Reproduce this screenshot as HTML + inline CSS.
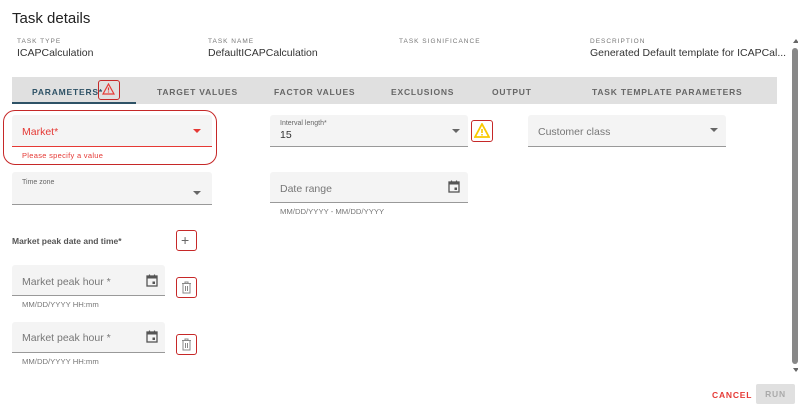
<!DOCTYPE html>
<html><head><style>
*{box-sizing:border-box;margin:0;padding:0}
body{width:798px;height:406px;overflow:hidden;background:#fff;font-family:"Liberation Sans",sans-serif;position:relative;color:#333}
.a{position:absolute;white-space:nowrap}
.lbl{font-size:6.5px;letter-spacing:1px;color:#777}
.val{font-size:10.5px;color:#333}
.tab{font-size:8.5px;font-weight:bold;letter-spacing:0.8px;color:#666;top:87px}
.fld{background:#f4f4f4;border-bottom:1px solid #999;border-radius:3px 3px 0 0}
.ph{font-size:10.5px;color:#777}
.hint{font-size:7.7px;color:#777}
.arr{width:0;height:0;border-left:4px solid transparent;border-right:4px solid transparent;border-top:4px solid #666}
.rb{border:1.5px solid #c62828;border-radius:3px}
</style></head><body>
<div class="a" style="left:12px;top:10px;font-size:15px;color:#222">Task details</div>
<div class="a lbl" style="left:17px;top:38px">TASK TYPE</div>
<div class="a val" style="left:17px;top:47px">ICAPCalculation</div>
<div class="a lbl" style="left:208px;top:38px">TASK NAME</div>
<div class="a val" style="left:208px;top:47px">DefaultICAPCalculation</div>
<div class="a lbl" style="left:399px;top:38px">TASK SIGNIFICANCE</div>
<div class="a lbl" style="left:590px;top:38px">DESCRIPTION</div>
<div class="a val" style="left:590px;top:47px">Generated Default template for ICAPCal...</div>

<div class="a" style="left:12px;top:77px;width:765px;height:27px;background:#e0e0e0"></div>
<div class="a" style="left:12px;top:102px;width:124px;height:2px;background:#2e5266"></div>
<div class="a tab" style="left:32px;color:#2e5266">PARAMETERS*</div>
<div class="a rb" style="left:98px;top:80px;width:22px;height:20px"></div>
<svg class="a" style="left:102px;top:83px" width="13" height="12" viewBox="0 0 13 12"><path d="M6.5 1 L12 11 H1 Z" fill="none" stroke="#e53935" stroke-width="1.2"/><path d="M6.5 4.5v3M6.5 8.5v1" stroke="#e53935" stroke-width="1.2"/></svg>
<div class="a tab" style="left:157px">TARGET VALUES</div>
<div class="a tab" style="left:274px">FACTOR VALUES</div>
<div class="a tab" style="left:391px">EXCLUSIONS</div>
<div class="a tab" style="left:492px">OUTPUT</div>
<div class="a tab" style="left:592px">TASK TEMPLATE PARAMETERS</div>

<div class="a fld" style="left:12px;top:115px;width:200px;height:32px;border-bottom-color:#e53935"></div>
<div class="a" style="left:22px;top:126px;font-size:10.5px;color:#e53935">Market*</div>
<div class="a arr" style="left:193px;top:129px;border-top-color:#e53935"></div>
<div class="a" style="left:22px;top:151px;font-size:7.5px;color:#e53935;letter-spacing:.3px">Please specify a value</div>
<div class="a" style="left:3px;top:110px;width:214px;height:55px;border:1.5px solid #c62828;border-radius:12px"></div>

<div class="a fld" style="left:270px;top:115px;width:198px;height:32px"></div>
<div class="a" style="left:280px;top:120px;font-size:7px;color:#666">Interval length*</div>
<div class="a" style="left:280px;top:129px;font-size:10.5px;color:#333">15</div>
<div class="a arr" style="left:452px;top:129px"></div>
<div class="a rb" style="left:471px;top:120px;width:22px;height:22px"></div>
<svg class="a" style="left:474px;top:123px" width="16" height="15" viewBox="0 0 16 15"><path d="M8 1 L15 14 H1 Z" fill="none" stroke="#f9c900" stroke-width="1.8"/><path d="M8 6v4M8 11v1.5" stroke="#f9c900" stroke-width="1.6"/></svg>

<div class="a fld" style="left:528px;top:115px;width:198px;height:32px"></div>
<div class="a ph" style="left:538px;top:126px">Customer class</div>
<div class="a arr" style="left:710px;top:128px"></div>

<div class="a fld" style="left:12px;top:172px;width:200px;height:33px"></div>
<div class="a" style="left:22px;top:179px;font-size:7px;color:#666">Time zone</div>
<div class="a arr" style="left:193px;top:191px"></div>

<div class="a fld" style="left:270px;top:172px;width:198px;height:31px"></div>
<div class="a ph" style="left:280px;top:183px">Date range</div>
<svg class="a" style="left:448px;top:180px" width="12" height="13" viewBox="0 0 12 13"><rect x="1" y="2" width="10" height="10" fill="none" stroke="#555" stroke-width="1.3"/><rect x="1" y="2" width="10" height="2.5" fill="#555"/><rect x="6.5" y="7.5" width="2.5" height="2.5" fill="#555"/><path d="M3.5 0.5v2M8.5 0.5v2" stroke="#555" stroke-width="1.2"/></svg>
<div class="a hint" style="left:280px;top:207px">MM/DD/YYYY - MM/DD/YYYY</div>

<div class="a" style="left:12px;top:236px;font-size:8.5px;font-weight:bold;color:#555">Market peak date and time*</div>
<div class="a rb" style="left:176px;top:230px;width:21px;height:21px"></div>
<div class="a" style="left:181px;top:233px;font-size:14px;color:#666;line-height:14px">+</div>

<div class="a fld" style="left:12px;top:265px;width:153px;height:31px"></div>
<div class="a ph" style="left:22px;top:276px">Market peak hour *</div>
<svg class="a" style="left:146px;top:274px" width="12" height="13" viewBox="0 0 12 13"><rect x="1" y="2" width="10" height="10" fill="none" stroke="#555" stroke-width="1.3"/><rect x="1" y="2" width="10" height="2.5" fill="#555"/><rect x="6.5" y="7.5" width="2.5" height="2.5" fill="#555"/><path d="M3.5 0.5v2M8.5 0.5v2" stroke="#555" stroke-width="1.2"/></svg>
<div class="a hint" style="left:22px;top:300px">MM/DD/YYYY HH:mm</div>
<div class="a rb" style="left:176px;top:277px;width:21px;height:21px"></div>
<svg class="a" style="left:181px;top:281px" width="11" height="13" viewBox="0 0 11 13"><path d="M1 2.5h9M4 2.5v-1.5h3v1.5M2 2.5v9.5h7v-9.5M4.5 5v5M6.5 5v5" fill="none" stroke="#888" stroke-width="1"/></svg>

<div class="a fld" style="left:12px;top:322px;width:153px;height:31px"></div>
<div class="a ph" style="left:22px;top:332px">Market peak hour *</div>
<svg class="a" style="left:146px;top:330px" width="12" height="13" viewBox="0 0 12 13"><rect x="1" y="2" width="10" height="10" fill="none" stroke="#555" stroke-width="1.3"/><rect x="1" y="2" width="10" height="2.5" fill="#555"/><rect x="6.5" y="7.5" width="2.5" height="2.5" fill="#555"/><path d="M3.5 0.5v2M8.5 0.5v2" stroke="#555" stroke-width="1.2"/></svg>
<div class="a hint" style="left:22px;top:357px">MM/DD/YYYY HH:mm</div>
<div class="a rb" style="left:176px;top:334px;width:21px;height:21px"></div>
<svg class="a" style="left:181px;top:338px" width="11" height="13" viewBox="0 0 11 13"><path d="M1 2.5h9M4 2.5v-1.5h3v1.5M2 2.5v9.5h7v-9.5M4.5 5v5M6.5 5v5" fill="none" stroke="#888" stroke-width="1"/></svg>

<div class="a" style="left:793px;top:39px;width:0;height:0;border-left:3px solid transparent;border-right:3px solid transparent;border-bottom:4px solid #666"></div>
<div class="a" style="left:792px;top:48px;width:6px;height:316px;background:#888;border-radius:3px"></div>
<div class="a" style="left:793px;top:368px;width:0;height:0;border-left:3px solid transparent;border-right:3px solid transparent;border-top:4px solid #666"></div>

<div class="a" style="left:712px;top:390px;font-size:8.5px;font-weight:bold;letter-spacing:0.8px;color:#e53935">CANCEL</div>
<div class="a" style="left:756px;top:384px;width:39px;height:20px;background:#e0e0e0;border-radius:2px;font-size:8.5px;font-weight:bold;letter-spacing:0.8px;color:#aaa;text-align:center;line-height:20px">RUN</div>
</body></html>
